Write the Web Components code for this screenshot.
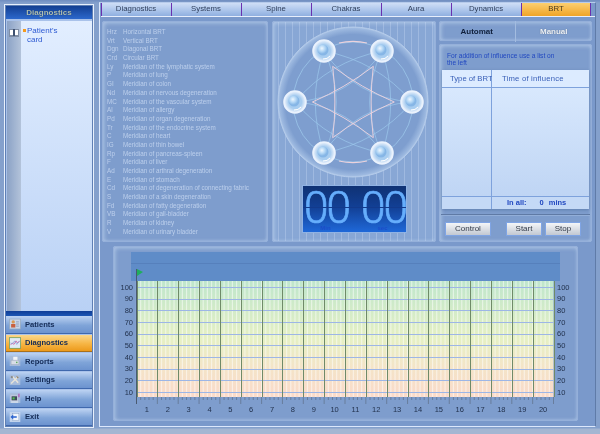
<!DOCTYPE html>
<html>
<head>
<meta charset="utf-8">
<style>
  html, body { margin: 0; height: 100%; }
  body { width: 600px; height: 434px; overflow: hidden; background: #7f9ccb; font-family: "Liberation Sans", Arial, sans-serif; }
</style>
</head>
<body>
<app-shell>
  <side-bar slot="side"></side-bar>
  <tab-bar slot="tabs"></tab-bar>
  <meridian-list slot="list"></meridian-list>
  <rosette-panel slot="rosette"></rosette-panel>
  <brt-panel slot="brt"></brt-panel>
  <graph-panel slot="graph"></graph-panel>
</app-shell>

<script>
const ICONS = {
  Patients: `<rect x="1" y="1" width="15" height="14" fill="#c9d6ea" stroke="#9ab"/><circle cx="6" cy="5" r="2.4" fill="#d89a55"/><rect x="3" y="8" width="6" height="5" fill="#c8603f"/><path d="M10 5h4M10 8h4M10 11h4" stroke="#7a8aa5"/>`,
  Diagnostics: `<rect x=".5" y=".5" width="16" height="15" fill="#dfeaf4" stroke="#5f9a5a"/><path d="M2 11l3-3 2 2 3-5 2 3 3-3" fill="none" stroke="#d0509a"/><path d="M2 8l3 1 3-4 3 5 4-5" fill="none" stroke="#5a80d0" stroke-width=".7"/>`,
  Reports: `<rect x="1" y="1" width="15" height="14" fill="#a9bddb"/><path d="M6 2h6v5H6z" fill="#f2f4f8"/><path d="M3 7h11v6H3z" fill="#d8dde6" stroke="#8b96a8" stroke-width=".5"/><rect x="10" y="9" width="2" height="2" fill="#57a957"/>`,
  Settings: `<rect x="1" y="1" width="15" height="14" fill="#a9bddb"/><path d="M3 13L12 4M5 3l8 9" stroke="#e8e4d8" stroke-width="2"/><path d="M10 2l4 2-2 2" fill="#99876a"/><circle cx="4" cy="4" r="1.6" fill="#8a8a8a"/>`,
  Help: `<rect x="1" y="1" width="15" height="14" fill="#a9bddb"/><rect x="3" y="5" width="9" height="7" fill="#3c4c5c" stroke="#dde"/><rect x="5" y="7" width="3" height="3" fill="#52c050"/><path d="M13 2h2v5h-2z" fill="#b060c0"/><path d="M3 13h10v1.500H3z" fill="#e8edf4"/>`,
  Exit: `<rect x="1" y="1" width="15" height="14" fill="#c6d6ee"/><rect x="5" y="3" width="9" height="10" fill="#f2f6fc" stroke="#7c97c0" stroke-width=".6"/><path d="M2 8l4-3.500V7h5v2H6v2.500z" fill="#2a63cf"/>`
};

class SideBar extends HTMLElement {
  constructor() {
    super();
    this.attachShadow({ mode: 'open' });
    const items = ['Patients', 'Diagnostics', 'Reports', 'Settings', 'Help', 'Exit'];
    this.shadowRoot.innerHTML = `
      <style>
        :host { display: flex; flex-direction: column; width: 90px; height: 424px; box-sizing: border-box; margin-top: 2px;
          border: 1px solid #e8f0fc; outline: 1px solid #5f7fb4; outline-offset: -2px; padding: 1px 1px 1px; background: #a9c2ea; }
        .head { height: 13px; line-height: 13px; text-align: center; font-size: 8px; font-weight: bold; color: #aebfb4;
          background: linear-gradient(#133f92, #2c68cc); text-shadow: 0 0 1px #0c2c60; }
        .tree { flex: 1; display: flex; margin: 1px 0 0 1px; padding-top: 1px; min-height: 0; }
        .strip { width: 14px; background: linear-gradient(90deg, #8ba2c6, #b3c3da); padding-top: 8px; box-sizing: border-box; }
        .strip svg { display: block; margin-left: 2px; }
        .list { flex: 1; background: linear-gradient(#e2eeff, #b9d1f5); padding: 5px 2px 0 2px; font-size: 8px; line-height: 9px; color: #2d5ad2; display: flex; }
        .dot { width: 3px; height: 3px; background: #f59a1e; margin: 3px 1px 0 0; flex: none; }
        .name { width: 38px; }
        .grip { height: 5px; background: linear-gradient(#0f3d96, #1c56b4); }
        .nav { display: grid; gap: 1px; grid-auto-rows: 17.500px; }
      </style>
      <div class="head">Diagnostics</div>
      <div class="tree">
        <div class="strip"><svg width="10" height="8" viewBox="0 0 10 8"><rect width="10" height="8" fill="#7f8ea6"/><rect x="1" y="1" width="3.500" height="5" fill="#fff"/><rect x="5.500" y="1" width="3.500" height="5" fill="#fff"/><rect x="4" y="0" width="2" height="7" fill="#3f5272"/></svg></div>
        <div class="list"><span class="dot"></span><span class="name">Patient's card</span></div>
      </div>
      <div class="grip"></div>
      <div class="nav">${items.map(n => `<nav-button label="${n}" ${n === 'Diagnostics' ? 'active' : ''}></nav-button>`).join('')}</div>
    `;
  }
}

class NavButton extends HTMLElement {
  constructor() {
    super();
    this.attachShadow({ mode: 'open' });
  }
  connectedCallback() {
    const label = this.getAttribute('label');
    this.shadowRoot.innerHTML = `
      <style>
        :host { display: flex; align-items: center; gap: 4px; padding-left: 3px; font-size: 7.600px; font-weight: bold;
          color: #132a55; background: linear-gradient(#bcd2f2, #7fa4d8 55%, #6c93cf); border-bottom: 1px solid #3f68ad; box-sizing: border-box; }
        :host([active]) { background: linear-gradient(#fbd78a, #f6b544 55%, #ec9a1c); border-bottom-color: #a8701c; }
        svg { flex: none; }
      </style>
      <svg width="12" height="12" viewBox="0 0 17 16">${ICONS[label]}</svg><span>${label}</span>
    `;
  }
}

class TabBar extends HTMLElement {
  constructor() {
    super();
    this.attachShadow({ mode: 'open' });
    const tabs = ['Diagnostics', 'Systems', 'Spine', 'Chakras', 'Aura', 'Dynamics', 'BRT'];
    this.shadowRoot.innerHTML = `
      <style>
        :host { display: grid; grid-template-columns: repeat(7, 70px); height: 13px; border-bottom: 1px solid #e6eefc; }
        div { text-align: center; line-height: 12px; font-size: 7.800px; color: #2f3f5c; border-left: 1px solid #6a30b0; border-right: 1px solid transparent;
          background: linear-gradient(#cfdef6, #a9c3ea 60%, #8fafe0); box-sizing: border-box; }
        div:last-child { background: linear-gradient(#fbcf70, #f0a428); border-right: 1px solid #6a30b0; color: #4a3a1c; }
      </style>
      ${tabs.map(t => `<div>${t}</div>`).join('')}
    `;
  }
}

class GlassPanel extends HTMLElement {
  constructor() {
    super();
    this.attachShadow({ mode: 'open' });
    this.shadowRoot.innerHTML = `
      <style>
        :host { display: block; box-sizing: border-box; border-radius: 3px; background: #7e9dcd;
          box-shadow: inset 0 0 0 1px #95b0da, inset 1px 1px 4px 1px rgba(215,230,250,.55), inset -1px -1px 3px rgba(200,220,250,.35); }
      </style>
      <slot></slot>
    `;
  }
}

class MeridianList extends HTMLElement {
  constructor() {
    super();
    this.attachShadow({ mode: 'open' });
    const rows = [['Hrz','Horizontal BRT'],['Vrt','Vertical BRT'],['Dgn','Diagonal BRT'],['Crd','Circular BRT'],
      ['Ly','Meridian of the lymphatic system'],['P','Meridian of lung'],['GI','Meridian of colon'],['Nd','Meridian of nervous degeneration'],
      ['MC','Meridian of the vascular system'],['Al','Meridian of allergy'],['Pd','Meridian of organ degeneration'],['Tr','Meridian of the endocrine system'],
      ['C','Meridian of heart'],['IG','Meridian of thin bowel'],['Rp','Meridian of pancreas-spleen'],['F','Meridian of liver'],
      ['Ad','Meridian of arthral degeneration'],['E','Meridian of stomach'],['Cd','Meridian of degeneration of connecting fabric'],['S','Meridian of a skin degeneration'],
      ['Fd','Meridian of fatty degeneration'],['VB','Meridian of gall-bladder'],['R','Meridian of kidney'],['V','Meridian of urinary bladder']];
    this.shadowRoot.innerHTML = `
      <style>
        :host { display: block; }
        glass-panel { height: 221px; padding: 7px 0 0 5px; }
        .row { display: grid; grid-template-columns: 16px 1fr; height: 8.700px; line-height: 8.700px; font-size: 6.300px; color: #bccfec; white-space: nowrap; }
      </style>
      <glass-panel>${rows.map(r => `<div class="row"><span>${r[0]}</span><span>${r[1]}</span></div>`).join('')}</glass-panel>
    `;
  }
}

class DigitalTimer extends HTMLElement {
  constructor() {
    super();
    this.attachShadow({ mode: 'open' });
    this.shadowRoot.innerHTML = `
      <style>
        :host { display: block; position: relative; width: 105px; height: 48px; box-sizing: border-box; border: 1px solid #8fb2e4;
          background: linear-gradient(#0f3274, #123f94 45%, #1f68d8); }
        .digits { display: grid; grid-template-columns: 44px 44px; column-gap: 13px; padding: 6px 0 0 0; height: 32px; justify-content: center; }
        .pair { font: 300 45px/32px Roboto, sans-serif; color: #66aefc; -webkit-text-stroke: .7px #66aefc; letter-spacing: -2px; transform: scaleX(.98); transform-origin: 0 50%; white-space: nowrap; }
        .gap { position: absolute; left: 0; right: 0; top: 21px; height: 1px; background: #123a8c; }
        .caps { display: grid; grid-template-columns: 44px 44px; column-gap: 13px; justify-content: center; text-align: center; font-size: 6px; line-height: 7px; font-weight: bold; color: #1c4cc8; padding-top: 1px; }
      </style>
      <div class="digits"><span class="pair">00</span><span class="pair">00</span></div>
      <div class="gap"></div>
      <div class="caps"><span>Min</span><span>sec</span></div>
    `;
  }
}

class RosettePanel extends HTMLElement {
  constructor() {
    super();
    this.attachShadow({ mode: 'open' });
    const cx = 81, cy = 79;
    const nodes = [[-29,-51],[29,-51],[59,0],[29,51],[-29,51],[-58,0]].map(p => [cx + p[0], cy + p[1]]);
    let arcs = '', pink = '';
    nodes.forEach((a, i) => {
      const b = nodes[(i + 2) % 6];
      const mx = (a[0] + b[0]) / 2, my = (a[1] + b[1]) / 2;
      const dx = mx - cx, dy = my - cy;
      // two curves per chord: one bowed outwards, one through the middle
      arcs += `<path d="M${a}Q${cx + dx * 1.6} ${cy + dy * 1.6} ${b}"/>`;
      arcs += `<path d="M${a}Q${cx + dx * .15} ${cy + dy * .15} ${b}"/>`;
      pink += `<path d="M${cx + (a[0] - cx) * .7} ${cy + (a[1] - cy) * .7}Q${cx + dx * .55} ${cy + dy * .55} ${cx + (b[0] - cx) * .7} ${cy + (b[1] - cy) * .7}"/>`;
    });
    const balls = nodes.map(n => `
      <circle cx="${n[0]}" cy="${n[1]}" r="11" fill="url(#ball)" stroke="#eaf2fd" stroke-width="1.600"/>
      <circle cx="${n[0] - 1}" cy="${n[1] - 1}" r="5.500" fill="url(#core)"/>
      <path d="M${n[0] + 6} ${n[1] + 5}a8 8 0 0 1-7 3" fill="none" stroke="#fff" stroke-width="1"/>`).join('');
    this.shadowRoot.innerHTML = `
      <style>
        :host { display: block; }
        glass-panel { height: 221px; display: flex; flex-direction: column; align-items: center; padding-top: 2px;
          background: repeating-linear-gradient(90deg, #88a7d5 0 6px, #9fb9e0 6px 7px); }
        svg { display: block; flex: none; }
        digital-timer { margin-top: 3px; }
      </style>
      <glass-panel>
        <svg width="164" height="159" viewBox="0 0 164 159">
          <defs>
            <radialGradient id="disc"><stop offset=".9" stop-color="#7e9ecf"/><stop offset=".98" stop-color="#9db9e0"/><stop offset="1" stop-color="#b4cbea"/></radialGradient>
            <radialGradient id="ball"><stop offset=".6" stop-color="#a8cdf0"/><stop offset=".85" stop-color="#d6e6f8"/><stop offset="1" stop-color="#f2f7fe"/></radialGradient>
            <radialGradient id="core" cx=".4" cy=".35"><stop offset="0" stop-color="#eef7ff"/><stop offset=".6" stop-color="#afd4f4"/><stop offset="1" stop-color="#86b6e6"/></radialGradient>
          </defs>
          <circle cx="${cx}" cy="${cy}" r="75" fill="url(#disc)" stroke="#b4cbea"/>
          <circle cx="${cx}" cy="${cy}" r="60" fill="none" stroke="#9cc6ea" stroke-width=".8"/>
          <path d="M${cx - 14} ${cy - 59}A60 60 0 0 1 ${cx + 14} ${cy - 59}M${cx - 14} ${cy + 59}A60 60 0 0 0 ${cx + 14} ${cy + 59}" fill="none" stroke="#ecd2dc" stroke-width="1.200"/>
          <g fill="none" stroke="#9cc8ec" stroke-width=".7">${arcs}</g>
          <g fill="none" stroke="#e6d0de" stroke-width="1">${pink}</g>
          ${balls}
        </svg>
        <digital-timer></digital-timer>
      </glass-panel>
    `;
  }
}

class BrtPanel extends HTMLElement {
  constructor() {
    super();
    this.attachShadow({ mode: 'open' });
    this.shadowRoot.innerHTML = `
      <style>
        :host { display: flex; flex-direction: column; gap: 3px; height: 221px; }
        .seg { height: 20px; display: grid; grid-template-columns: 1fr 1fr; font-size: 8px; font-weight: bold; text-align: center; line-height: 21px; }
        .seg span:first-child { color: #10203c; border-right: 1px solid #a3bce0; }
        .seg span:last-child { color: #eef3fa; text-shadow: 0 0 1px #4c5c70; }
        .box { flex: 1; display: flex; flex-direction: column; padding: 9px 3px 0; }
        .hint { font-size: 6.600px; line-height: 6.500px; color: #2148c0; padding-left: 5px; width: 112px; height: 17px; }
        .table { height: 139px; display: grid; grid-template-columns: 49px 1fr; grid-template-rows: 17px 1fr 12px; gap: 1px;
          background: #7ea2dc; box-shadow: 0 1px 3px rgba(50,80,130,.4); }
        .th { background: #dcebff; color: #3a60b8; font-size: 7.700px; line-height: 17px; white-space: nowrap; }
        .th.a { padding-left: 8px; }
        .th.b { padding-left: 10px; letter-spacing: .2px; }
        .cell { background: linear-gradient(#d8e8fd, #bfd5f4); }
        .foot { background: #c4d9f6; }
        .total { color: #2148c0; font-size: 7.500px; font-weight: bold; line-height: 12px; padding-left: 15px; display: flex; gap: 13px; }
        .total span + span { display: inline-flex; gap: 5px; }
        .rule { height: 1px; background: #5f7aa5; margin: 5px -1px 0; border-bottom: 1px solid #92aed8; }
        .actions { display: flex; padding: 6px 3px 0 3px; }
        .btn { height: 14px; box-sizing: border-box; border: 1px solid #7fa4e4; background: linear-gradient(#f4f6f8, #c2c8d2); color: #333b48; font-size: 8px; line-height: 12px; text-align: center; }
      </style>
      <glass-panel class="seg"><span>Automat</span><span>Manual</span></glass-panel>
      <glass-panel class="box">
        <div class="hint">For addition of influence use a list on the left</div>
        <div class="table">
          <div class="th a">Type of BRT</div><div class="th b">Time of influence</div>
          <div class="cell"></div><div class="cell"></div>
          <div class="foot"></div><div class="foot total"><span>In all:</span><span><span>0</span><span>mins</span></span></div>
        </div>
        <div class="rule"></div>
        <div class="actions">
          <div class="btn" style="width:46px;margin-right:15px">Control</div>
          <div class="btn" style="width:36px;margin-right:3px">Start</div>
          <div class="btn" style="width:36px">Stop</div>
        </div>
      </glass-panel>
    `;
  }
}

class GraphPanel extends HTMLElement {
  constructor() {
    super();
    this.attachShadow({ mode: 'open' });
    const x0 = 23.5, x1 = 440.5, top = 35, y100 = 41, step = 11.67, bottom = 151;
    const col = (x1 - x0) / 20;
    let minor = '', major = '', hz = '', labels = '', ticks = '';
    for (let i = 0; i < 100; i++) {
      const x = x0 + col * i / 5;
      minor += `M${x} ${top}V${bottom}`;
      ticks += `M${x} ${bottom}v${i % 5 ? 3 : 7}`;
    }
    ticks += `M${x1} ${bottom}v7`;
    for (let i = 0; i <= 20; i++) major += `M${Math.round(x0 + col * i) + .5} ${top}V${bottom}`;
    for (let i = 1; i <= 20; i++) {
      labels += `<text x="${x0 + col * (i - .5)}" y="165.500" text-anchor="middle">${i}</text>`;
    }
    for (let i = 0; i < 10; i++) {
      const y = y100 + step * i;
      hz += `M${x0} ${Math.round(y) + .5}H${x1}`;
      labels += `<text x="20" y="${y + 2.500}" text-anchor="end">${100 - i * 10}</text>`;
      labels += `<text x="444" y="${y + 2.500}">${100 - i * 10}</text>`;
    }
    this.shadowRoot.innerHTML = `
      <style>
        :host { display: block; margin-left: 12px; width: 465px; }
        glass-panel { height: 175px; }
        svg { display: block; }
        text { font: 7.500px "Liberation Sans", Arial, sans-serif; fill: #22324e; }
      </style>
      <glass-panel>
        <svg width="465" height="175" viewBox="0 0 465 175">
          <defs>
            <linearGradient id="bg" x1="0" y1="0" x2="0" y2="1">
              <stop offset="0" stop-color="#bfe6cc"/><stop offset=".5" stop-color="#e6f0c4"/><stop offset=".75" stop-color="#f4e4c8"/><stop offset="1" stop-color="#fadaca"/>
            </linearGradient>
          </defs>
          <rect x="18" y="6" width="429" height="29" fill="#5f8cc8"/>
          <path d="M18 17.500H447" stroke="#5680bc"/>
          <rect x="${x0}" y="${top}" width="${x1 - x0}" height="${bottom - top}" fill="url(#bg)"/>
          <path d="${minor}" stroke="#fff" stroke-opacity=".5" stroke-width="1.200"/>
          <path d="${hz}" stroke="#9db6e6" stroke-width="1"/>
          <path d="${major}" stroke="#6f8a68" stroke-width="1"/>
          <path d="${ticks}" stroke="#5f7088" stroke-width=".7"/>
          <path d="M${x0} 23V${bottom + 7}" stroke="#4a5a70"/>
          <path d="M${x0 + .5} 23l6 3-6 4z" fill="#1fae5e"/>
          ${labels}
        </svg>
      </glass-panel>
    `;
  }
}

class AppShell extends HTMLElement {
  constructor() {
    super();
    this.attachShadow({ mode: 'open' });
    this.shadowRoot.innerHTML = `
      <style>
        :host { display: flex; width: 600px; height: 434px; box-sizing: border-box; padding: 2px 0 0 4px; gap: 5px; filter: blur(.3px);
          background: linear-gradient(#6f8dc0 0, #84a0cc 3px, #84a0cc 428px, #a4b6d2 429px); }
        .frame { width: 497px; height: 425px; box-sizing: border-box; border: 1px solid #dce8fc; border-top-color: #b7cbeb; border-right-color: #5f7ba8; padding: 0 0 0 1px; background: #7a99cb; }
        .top { display: grid; grid-template-columns: 166px 164px 152px; column-gap: 4px; margin: 4px 0 4px 1px; }
        .top ::slotted([slot=brt]) { margin-left: -1px; }
      </style>
      <slot name="side"></slot>
      <div class="frame">
        <slot name="tabs"></slot>
        <div class="top"><slot name="list"></slot><slot name="rosette"></slot><slot name="brt"></slot></div>
        <slot name="graph"></slot>
      </div>
    `;
  }
}

customElements.define('nav-button', NavButton);
customElements.define('glass-panel', GlassPanel);
customElements.define('side-bar', SideBar);
customElements.define('tab-bar', TabBar);
customElements.define('meridian-list', MeridianList);
customElements.define('digital-timer', DigitalTimer);
customElements.define('rosette-panel', RosettePanel);
customElements.define('brt-panel', BrtPanel);
customElements.define('graph-panel', GraphPanel);
customElements.define('app-shell', AppShell);
</script>
</body>
</html>
